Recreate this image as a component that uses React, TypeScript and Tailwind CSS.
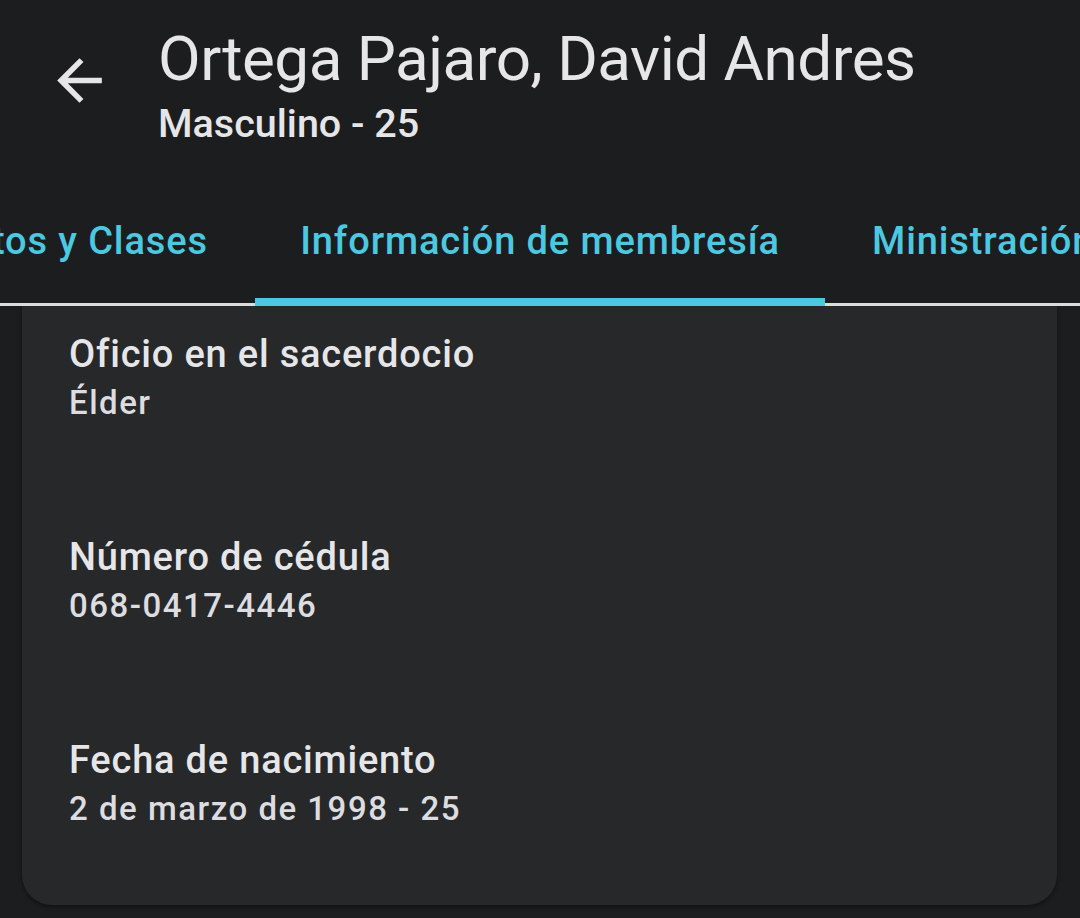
export default function App() {
  const fields = [
    { label: "Oficio en el sacerdocio", value: "Élder" },
    { label: "Número de cédula", value: "068-0417-4446" },
    { label: "Fecha de nacimiento", value: "2 de marzo de 1998 - 25" },
  ];

  return (
    <div
      className="w-[1080px] h-[918px] overflow-hidden bg-[#1c1d1f] text-[#e6e6e8] flex flex-col"
      style={{ fontFamily: "Roboto, 'Noto Sans', sans-serif" }}
    >
      {/* Header */}
      <div className="flex items-start h-[180px] shrink-0">
        <div className="w-[158px] shrink-0 pl-[46px] pt-[47px]">
          <svg width="67" height="67" viewBox="0 0 24 24" fill="#e6e6e8">
            <path d="M20 11H7.83l5.59-5.59L12 4l-8 8 8 8 1.41-1.41L7.83 13H20v-2z" />
          </svg>
        </div>
        <div className="flex flex-col pt-[23px]">
          <div className="text-[62px] leading-[72px] tracking-[-0.5px] whitespace-nowrap">Ortega Pajaro, David Andres</div>
          <div className="text-[39.5px] leading-[46px] font-medium mt-[6px]">Masculino - 25</div>
        </div>
      </div>

      {/* Tabs */}
      <div className="relative h-[126px] shrink-0 overflow-hidden">
        <div className="flex h-full text-[38px] leading-[44px] font-medium text-[#4cc8e0] tracking-[0.9px]">
          <div className="w-[255px] shrink-0 flex justify-end">
            <div className="shrink-0 px-[47px] pt-[39px] whitespace-nowrap">Llamamientos y Clases</div>
          </div>
          <div className="shrink-0 w-[570px] pt-[39px] text-center whitespace-nowrap">Información de membresía</div>
          <div className="shrink-0 px-[47px] pt-[39px] whitespace-nowrap">Ministración</div>
        </div>
        <div className="absolute left-0 right-0 bottom-0 h-[3px] bg-[#dcdcdc]" />
        <div className="absolute left-[255px] w-[570px] bottom-0 h-[8px] bg-[#4cc8e0]" />
      </div>

      {/* Card */}
      <div className="ml-[22px] mr-[23px] h-[599px] shrink-0 bg-[#27282a] rounded-b-[30px] shadow-[0_2px_4px_rgba(0,0,0,0.4)] px-[47px] pt-[25px] flex flex-col gap-[111px]">
        {fields.map((f) => (
          <div key={f.label} className="flex flex-col">
            <div className="text-[38px] leading-[46px] font-medium tracking-[0.8px] text-[#e6e6e8] whitespace-nowrap">{f.label}</div>
            <div className="text-[33px] leading-[40px] font-medium tracking-[1.5px] text-[#dddde0] mt-[6px] whitespace-nowrap">{f.value}</div>
          </div>
        ))}
      </div>
    </div>
  );
}
